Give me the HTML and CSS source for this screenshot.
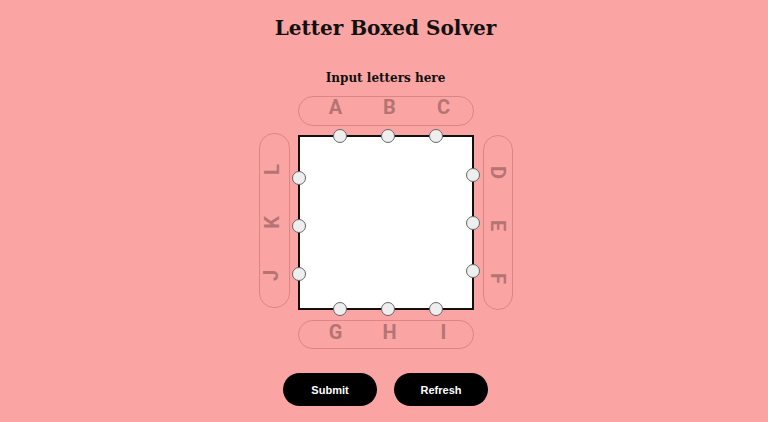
FILE: index.html
```html
<!DOCTYPE html>
<html>
<head>
<meta charset="utf-8">
<link rel="stylesheet" href="styles.css">
</head>
<body>
<main class="page">
  <h1 class="title">Letter Boxed Solver</h1>
  <p class="subtitle">Input letters here</p>
  <div class="board">
    <div class="pill pill-top"><span>A</span><span>B</span><span>C</span></div>
    <div class="pill pill-left"><span>L</span><span>K</span><span>J</span></div>
    <div class="box">
      <i class="dot" style="left:41px;top:0"></i>
      <i class="dot" style="left:89px;top:0"></i>
      <i class="dot" style="left:137px;top:0"></i>
      <i class="dot" style="left:41px;top:173px"></i>
      <i class="dot" style="left:89px;top:173px"></i>
      <i class="dot" style="left:137px;top:173px"></i>
      <i class="dot" style="left:0;top:42px"></i>
      <i class="dot" style="left:0;top:90px"></i>
      <i class="dot" style="left:0;top:138px"></i>
      <i class="dot" style="left:174px;top:39px"></i>
      <i class="dot" style="left:174px;top:87px"></i>
      <i class="dot" style="left:174px;top:135px"></i>
    </div>
    <div class="pill pill-right"><span>D</span><span>E</span><span>F</span></div>
    <div class="pill pill-bottom"><span>G</span><span>H</span><span>I</span></div>
  </div>
  <div class="actions">
    <button class="btn">Submit</button>
    <button class="btn">Refresh</button>
  </div>
</main>
</body>
</html>
```
FILE: styles.css
```css
html, body {
  margin: 0;
  padding: 0;
  background: #faa5a4;
  height: 100%;
}
.page {
  display: flex;
  flex-direction: column;
  align-items: center;
  padding-left: 3px;
  padding-top: 14px;
}
.title {
  margin: 0;
  font-family: "DejaVu Serif", serif;
  font-weight: bold;
  font-size: 20px;
  line-height: 28px;
  color: #111;
}
.subtitle {
  margin: 26px 0 0;
  font-family: "DejaVu Serif", serif;
  font-weight: bold;
  font-size: 12px;
  line-height: 20px;
  color: #111;
}
.board {
  margin-top: 8px;
  display: grid;
  grid-template-columns: 31px 176px 31px;
  grid-template-rows: 30px 175px 30px;
  column-gap: 8px;
  row-gap: 9px;
}
.pill {
  border: 1px solid rgba(150, 60, 60, 0.3);
  box-sizing: border-box;
  display: flex;
  align-items: center;
  justify-content: center;
  font-family: Roboto, "Liberation Sans", sans-serif;
  font-weight: bold;
  font-size: 20px;
  color: #b57474;
}
.pill-top, .pill-bottom {
  grid-column: 2;
  border-radius: 15px;
  padding-left: 8px;
}
.pill-top span, .pill-bottom span {
  width: 54px;
  text-align: center;
}
.pill-top { grid-row: 1; padding-bottom: 8px; }
.pill-bottom { grid-row: 3; margin-top: 1px; padding-bottom: 6px; }
.pill-left, .pill-right {
  grid-row: 2;
  flex-direction: column;
  border-radius: 15px;
}
.pill-left { grid-column: 1; margin-top: -2px; height: 175px; padding-top: 4px; }
.pill-right { grid-column: 3; padding-top: 6px; margin-left: 1px; }
.pill-left span, .pill-right span {
  height: 53px;
  display: flex;
  align-items: center;
  justify-content: center;
}
.pill-left span { transform: rotate(-90deg); margin-left: -6px; }
.pill-right span { transform: rotate(90deg); margin-left: 2px; }
.box {
  grid-column: 2;
  grid-row: 2;
  position: relative;
  background: #fff;
  border: 2px solid #111;
  box-sizing: border-box;
}
.dot {
  position: absolute;
  width: 12px;
  height: 12px;
  margin: -8px 0 0 -8px;
  border-radius: 50%;
  background: #eeeeee;
  border: 1px solid #666;
}
.actions {
  margin-top: 24px;
  display: flex;
  gap: 17px;
}
.btn {
  width: 94px;
  height: 33px;
  border: none;
  border-radius: 17px;
  background: #000;
  color: #fff;
  font-family: "Liberation Sans", Arial, sans-serif;
  font-weight: bold;
  font-size: 11px;
  cursor: pointer;
}
```
